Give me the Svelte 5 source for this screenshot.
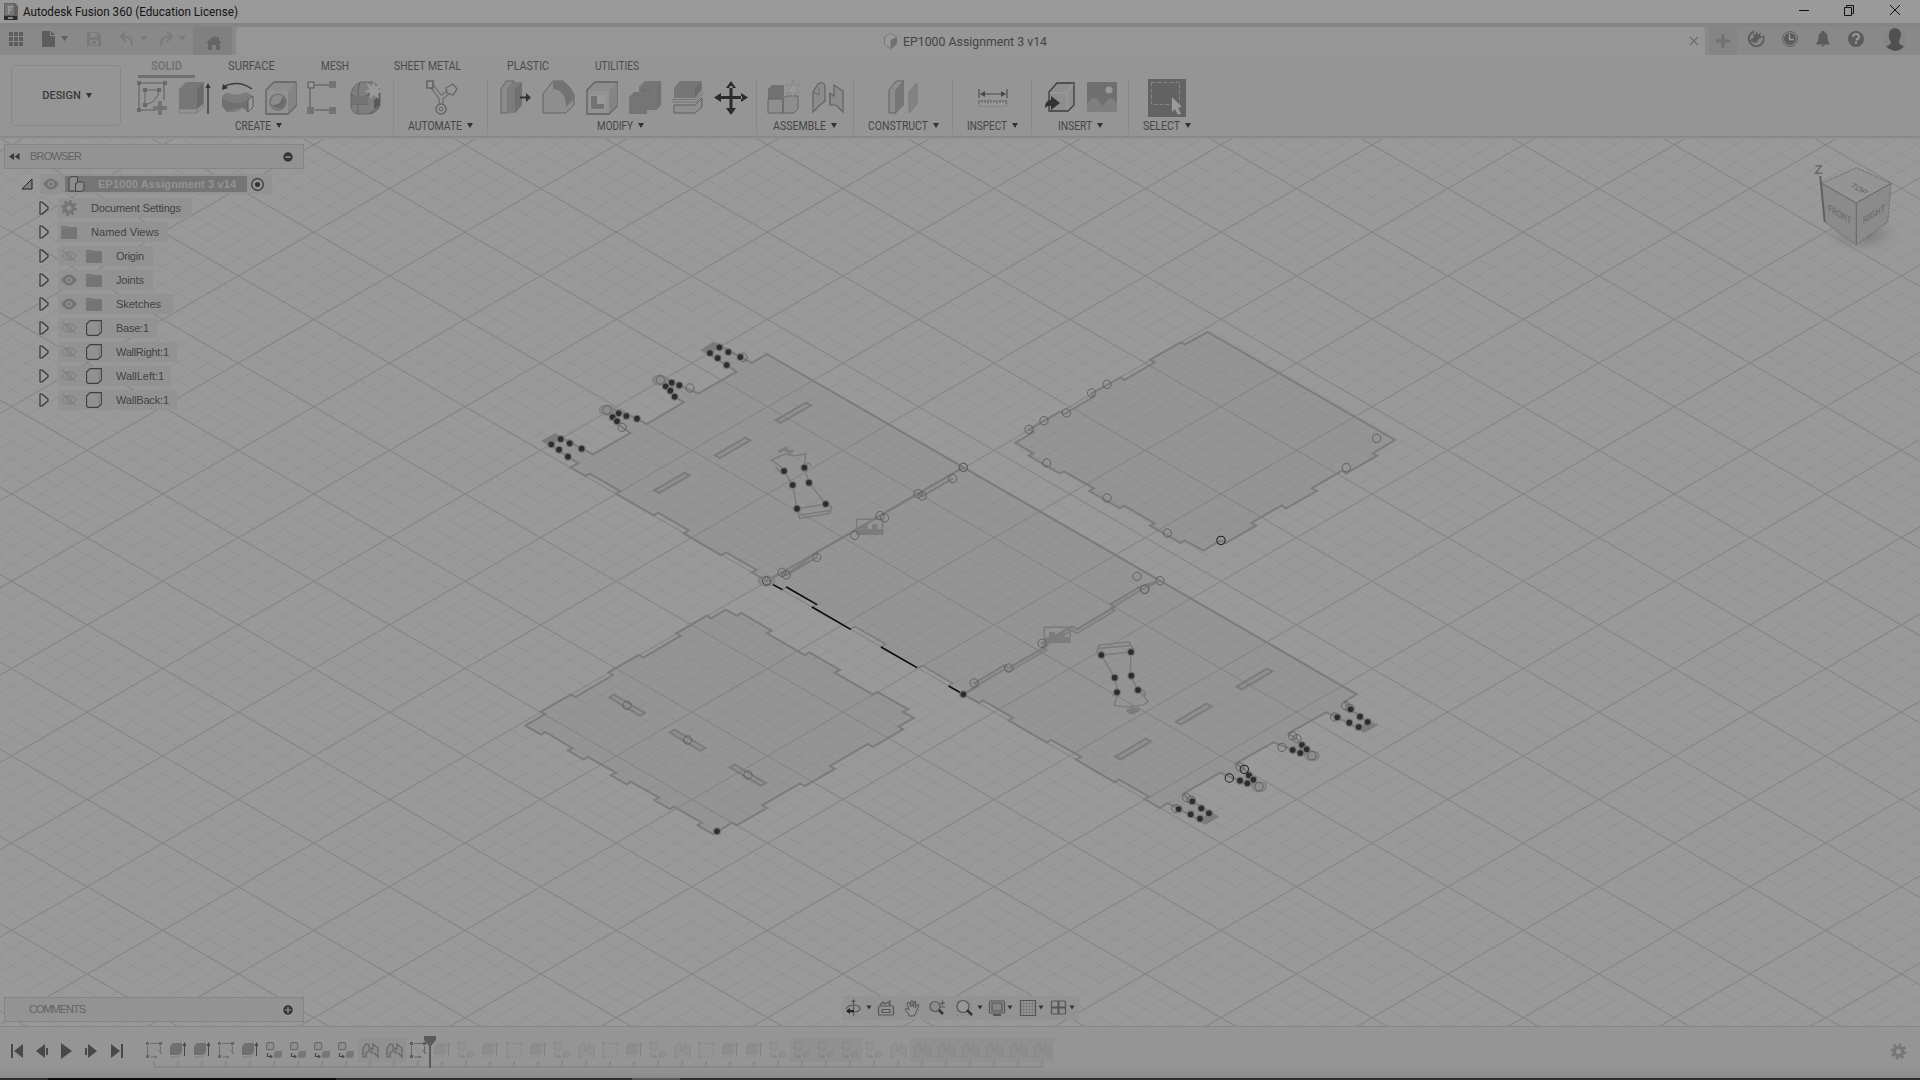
<script>
  const tabs = [
    ['SOLID', 151, 31], ['SURFACE', 228, 47], ['MESH', 321, 28],
    ['SHEET METAL', 394, 67], ['PLASTIC', 507, 42], ['UTILITIES', 595, 44]
  ];
  const tabItems = tabs.map(([name, x, w], i) => ({
    name, w, gap: i ? x - tabs[i - 1][1] - tabs[i - 1][2] : x
  }));

  const groups = [
    { label: 'CREATE', tw: 36, w: 267, icons: ['sketch', 'extrude', 'revolve', 'hole', 'pattern', 'form'] },
    { label: 'AUTOMATE', tw: 54, w: 94, icons: ['automate'] },
    { label: 'MODIFY', tw: 36, w: 269, icons: ['press', 'fillet', 'shell', 'combine', 'split', 'move'] },
    { label: 'ASSEMBLE', tw: 53, w: 97, icons: ['component', 'joint'] },
    { label: 'CONSTRUCT', tw: 60, w: 99, icons: ['plane'] },
    { label: 'INSPECT', tw: 40, w: 79, icons: ['measure'] },
    { label: 'INSERT', tw: 34, w: 97, icons: ['insert', 'image'] },
    { label: 'SELECT', tw: 37, w: 76, icons: ['select'] }
  ];

  const tree = [
    { t: 'Document Settings', icon: 'gear', w: 134, tw: 90 },
    { t: 'Named Views', icon: 'folder', w: 110, tw: 68 },
    { t: 'Origin', eye: 'off', icon: 'folder', w: 95, tw: 28 },
    { t: 'Joints', eye: 'on', icon: 'folder', w: 95, tw: 28 },
    { t: 'Sketches', eye: 'on', icon: 'folder', w: 115, tw: 45 },
    { t: 'Base:1', eye: 'off', icon: 'body', w: 99, tw: 33 },
    { t: 'WallRight:1', eye: 'off', icon: 'body', w: 119, tw: 53 },
    { t: 'WallLeft:1', eye: 'off', icon: 'body', w: 113, tw: 48 },
    { t: 'WallBack:1', eye: 'off', icon: 'body', w: 119, tw: 53 }
  ];

  // s = sketch, e = extrude, c = component, j = joint; capitals are highlighted
  const timeline = 'seesecccc' + 'JJs' + 'ecesecjsecjseec' + 'CCC' + 'cj' + 'JJJJJJ';
  const items = [...timeline].map((k, i) => ({ k: k.toLowerCase(), hl: k !== k.toLowerCase(), off: i > 11, dark: i === 11 }));

  // isometric grid: two families of parallel lines, every fifth one is heavier
  const S = 0.57735;
  const lines = [];
  const step = 17.456;
  for (let i = -80; i < 130; i++) {
    const a = -298.2 + i * step;
    const b = 1111.6 + (i - 40) * step;
    if (a + S * 1920 > 136 && a < 1026) lines.push({ y1: a, y2: a + S * 1920, major: i % 5 === 0 });
    if (b > 136 && b - S * 1920 < 1026) lines.push({ y1: b, y2: b - S * 1920, major: (i - 40) % 5 === 0 });
  }
  lines.sort((p, q) => p.major - q.major);

  const wallA = '770,102 1360,442 1224,521 1110,587 1034,632 920,697 829,765 816,757 770,783 725,757 740,750 648,697 634,706 522,641 536,631 444,578 432,587 318,521 331,514 239,461 227,468 181,442 205,430 174,410 99,363 136,343 215,386 249,403 361,339 335,322 308,291 272,268 290,258 381,296 410,312 521,247 494,230 467,199 432,180 450,166 508,196 566,220 680,155 650,135 577,90 612,68 691,111 725,129';
  const wallB = '660,-28 1250,313 1213,335 1232,358 1283,396 1309,405 1273,425 1192,382 1158,367 1045,430 1070,446 1100,478 1120,497 1081,489 1058,480 1000,457 887,520 913,538 940,568 965,590 922,580 900,573 840,548 728,612 757,634 832,680 796,701 716,657 683,639 660,654 614,627 627,620 536,568 524,577 408,509 424,501 333,450 320,458 206,391 219,383 129,331 117,339 70,313 115,288 103,279 193,226 206,234 320,168 306,160 396,109 411,118 525,50 511,43 600,-10';
  const base = '1390,-308 1980,32 1920,62 1831,115 1845,122 1731,190 1716,181 1626,232 1640,240 1526,306 1513,298 1423,351 1390,373 1346,348 1358,340 1267,287 1251,293 1143,231 1157,222 1064,169 1052,178 936,111 951,104 859,51 847,59 800,33';
  const sheetC = '743,66 1305,390 1238,430 1251,437 1159,490 1146,482 1055,535 1070,543 978,595 965,586 874,639 888,647 797,699 783,691 730,722 674,691 662,699 570,647 584,640 493,587 480,595 388,543 402,535 312,484 298,490 206,437 220,430 166,398 221,366 207,358 300,305 312,312 402,260 395,250 482,202 493,210 584,157 570,149 662,97 674,104';
  const sheetD = '678,119 710,137 723,129 815,182 801,190 914,255 928,247 1020,300 1004,308 1118,373 1132,366 1224,418 1209,426 1242,444 1195,470 1209,478 1118,531 1104,522 990,588 1005,596 914,648 900,640 787,706 801,714 710,766 696,758 640,793 593,766 606,758 521,710 510,717 463,690 477,683 392,635 380,643 333,616 348,608 264,561 251,569 204,542 218,535 136,486 123,494 76,467 135,432 122,426 213,373 226,381 339,315 325,307 416,255 430,263 542,197 529,190 620,137 633,145';

  const dotsA = [[628,82],[655,96],[600,99],[623,114],[650,135],[691,111],[485,188],[508,196],[467,199],[481,212],[494,230],[326,280],[349,288],[308,291],[321,304],[381,296],[152,357],[179,370],[124,373],[147,389],[215,386],[174,410],[822,453],[883,443],[848,495],[897,488],[861,566],[947,552]];
  const dotsB = [[484,195],[573,186],[524,263],[574,257],[531,307],[594,300],[1232,358],[1260,380],[1283,396],[1192,382],[1228,398],[1256,411],[1086,465],[1100,478],[1058,480],[1081,489],[927,556],[940,569],[900,572],[922,580],[757,634],[784,655],[807,670],[716,657],[752,673],[780,686],[70,313]];
  const ringsA = [[699,112],[540,204],[451,180],[291,270],[336,322],[1360,442],[1328,476],[1224,521],[1237,528],[1110,587],[1124,594],[1034,646],[920,712],[816,757],[829,765]];
  const ringsB = [[102,279],[206,234],[306,160],[614,-2],[1217,347],[1230,355],[1184,381],[1058,438],[1071,446],[1026,472],[1116,497],[900,531],[957,590],[740,623],[754,630],[708,656]];
  const ringsC = [[441,223],[395,249],[319,309],[252,332],[207,358],[260,459],[441,564],[622,669],[783,691,1],[1159,473],[1250,385],[531,799],[554,838],[600,812],[10,472]];
  const ringsD = [[381,406],[563,510],[744,615]];
</script>

{#snippet miniJoint()}
  <path d="M1 15V6l3-4 3 1v6l-3 2v4zM9 6l2 1V2l5 4v9l-4-4H9z" fill="#8b8b8b" stroke="#5c5c5c" stroke-width="1.2" />
{/snippet}

{#snippet cube(x, y, s)}
  <g transform="translate({x} {y}) scale({s})">
    <path d="M1 9 9 1h22v24l-8 8H1z" fill="#8d8d8d" stroke="#626262" stroke-width="1.3" />
    <path d="M2 10h21v22H2z" fill="#929292" /><path d="M23 10 31 2v22l-8 8z" fill="#848484" />
  </g>
{/snippet}

{#snippet tool(name)}
  <svg class="tool" width="34" height="40" viewBox="0 0 34 40">
    {#if name === 'sketch'}
      <path d="M4 5h25v17M4 5v27h17" fill="none" stroke="#5c5c5c" /><path d="M10 12h14M10 12v15M10 27q13-3 14-15" fill="none" stroke="#626262" />
      <path d="M2 3h4v4H2zM28 3h4v4h-4zM2 30h4v4H2zM8 10h4v4H8zM22 10h4v4h-4zM8 25h4v4H8z" fill="#686868" /><path d="M23 23h4v5h5v4h-5v5h-4v-5h-5v-4h5z" fill="#747474" />
    {:else if name === 'extrude'}
      <path d="M1 11 8 4h18v24l-7 7H1z" fill="#777" /><path d="M19 11 25 5v24l-6 5z" fill="#6b6b6b" /><path d="M1 31h18v4H1zM19 31l7-6v4l-7 6z" fill="#929292" stroke="#777" stroke-width=".6" /><path d="M30 36V9" stroke="#333" stroke-width="1.3" /><path d="m27.500 10 2.500-5 2.500 5z" fill="#333" />
    {:else if name === 'revolve'}
      <path d="M2 9Q17 1 31 11" fill="none" stroke="#3b3b3b" stroke-width="1.4" /><path d="m1 12 1-6 5 4z" fill="#333" />
      <path d="M1 19q3-6 7-4 8 4 17-1l7 4-6 7Q17 37 5 33L1 28z" fill="#7c7c7c" /><path d="M1 20q12 8 25 3l6-5v12l-6 4q-3-5-9-4-8 1-11 4l-5-6z" fill="#707070" /><path d="M27 22 32 18v11l-5 5z" fill="#999" stroke="#5c5c5c" />
    {:else if name === 'hole'}
      {@render cube(1, 3, 1)}<circle cx="14" cy="24" r="8" fill="#8d8d8d" stroke="#686868" stroke-width="1.2" /><path d="M18 18q6 6 0 12-6 2-10-3 10 0 10-9" fill="#6b6b6b" />
    {:else if name === 'pattern'}
      <path d="M3 11v18M8 7h14M8 32h14" stroke="#555" /><path d="M1 4h6v6H1z" fill="#999" stroke="#555" /><path d="M22 3h7v7h-7zM0 29h7v7H0zM22 29h7v7h-7z" fill="#737373" />
    {:else if name === 'form'}
      <path d="M1 17q1-10 10-13h12q7 4 7 12v11q-3 9-12 9H8q-7-1-7-9z" fill="#7f7f7f" stroke="#666" /><path d="M1 17q8 4 18 0V9l10 5v15l-10 7M10 4q-3 5-2 32M1 26h18" fill="none" stroke="#5f5f5f" /><path d="M2 18h16v8H2z" fill="#747474" /><path d="m24 22 6-5v10l-6 4z" fill="#5a5a5a" /><path d="m24 3 1.600 5.500L31 6l-2.500 5 3.500 3-4 1 1 6-5-4-4 4v-6l-5-1 4-3-3-6 6 3z" fill="#999" />
    {:else if name === 'automate'}
      <g fill="none"><path d="M7 7 17 20v12M28 11 17 20" stroke="#707070" stroke-width="5" /><path d="M7 7 17 20v12M28 11 17 20" stroke="#949494" stroke-width="2.400" /></g><path d="M3 3h6v7H3z" fill="#999" stroke="#606060" stroke-width="1.500" /><path d="m29 6 4 5-4 6-6-2-1-5z" fill="#969696" stroke="#666" stroke-width="1.300" /><circle cx="17" cy="31" r="5" fill="#999" stroke="#666" stroke-width="1.500" /><circle cx="17" cy="31" r="2" fill="none" stroke="#5d5d5d" />
    {:else if name === 'press'}
      <path d="M2 11 7 3h8L9 11v24H2z" fill="#8b8b8b" stroke="#656565" /><path d="m9 11 5-7h9v23l-7 8H9z" fill="#7c7c7c" /><path d="m16 11 7-7v23l-7 8z" fill="#707070" /><path d="M21 18.500h6V15l5 4.500-5 4.500v-3.500h-6z" fill="#333" />
    {:else if name === 'fillet'}
      <path d="M1 16 11 3h10l11 13v11l-8 8H1z" fill="#8e8e8e" stroke="#656565" /><path d="M11 4h10q10 3 11 17l-8 8q0-17-13-18z" fill="#737373" />
    {:else if name === 'shell'}
      {@render cube(1, 3, 1)}<path d="M5 17h15v15H5z" fill="#999" /><path d="M6 18v13h13v-5h-7v-8z" fill="#737373" />
    {:else if name === 'combine'}
      <path d="M1 19 6 14h5V9l6-6h16v24l-5 5h-9v4H1z" fill="#757575" /><path d="M2 19h10v-9h15M28 10v22l5-5V4z" fill="#707070" stroke="#7e7e7e" stroke-width=".7" />
    {:else if name === 'split'}
      <path d="M3 10 9 3h22v9l-7 8H3z" fill="#767676" /><path d="m24 10 6-6v8l-6 7z" fill="#6b6b6b" /><path d="M1 21.500h23l8-8M1 24h24l7-8" fill="none" stroke="#777" /><path d="M3 27h21l7-7v9l-7 6H3z" fill="#8f8f8f" stroke="#5f5f5f" />
    {:else if name === 'move'}
      <path d="M15.500 8h3v10H28v3h-9.500v11h-3V21H6v-3h9.500zM12 10h10L17 3zM12 30h10l-5 7zM7 15v9l-7-4.500zM27 15v9l7-4.500z" fill="#2c2c2c" />
    {:else if name === 'component'}
      <path d="M1 11 5 7h12v11l-2 3H1z" fill="#727272" /><path d="M1 21h15v14H1zM16 20l4-2h11v13l-4 4H16z" fill="#8e8e8e" stroke="#656565" /><path d="m26 2 1.700 6 5-2-3 5 3 4-5-1-1.700 6-2-6-5 2 3-5-3-5 5 3z" fill="#999" stroke="#888" />
    {:else if name === 'joint'}
      <path d="M3 34V14L8 6q6-3 7 2v15l-5 4zM20 15l4 3V7l9 6v21l-7-7h-6z" fill="#8c8c8c" stroke="#636363" stroke-width="1.200" /><path d="M3 14l6 3V9M20 27V15" stroke="#686868" fill="none" />
    {:else if name === 'plane'}
      <path d="M3 12 10 3h8l-8 9v23H3z" fill="#8d8d8d" stroke="#606060" /><path d="m10 12 8-9v24l-8 8z" fill="#757575" /><path d="M23 14 31 5v21l-8 9z" fill="#838383" stroke="#787878" />
    {:else if name === 'measure'}
      <path d="M4 11v9M32 11v9M6 16h24" stroke="#4f4f4f" stroke-width="1.200" /><path d="m5 16 5-3v6zM31 16l-5-3v6z" fill="#484848" /><path d="M4 23h28v5H4z" fill="#999" stroke="#828282" /><path d="M4 22v4M7 22v3M10 22v3M13 22v4M16 22v3M19 22v3M22 22v4M25 22v3M28 22v3M31 22v4" stroke="#606060" />
    {:else if name === 'insert'}
      <path d="M7 14 15 5h17v22l-6 6H7z" fill="#8e8e8e" stroke="#3c3c3c" stroke-width="1.300" /><path d="M8 15h17v17M25 14l6-8" fill="none" stroke="#999" stroke-width="1.600" /><path d="M3 30q0-8 6-8v-4l9 7-9 7v-4q-3-1-6 2z" fill="#333" />
    {:else if name === 'image'}
      <path d="M2 4h30v30H2z" fill="#6f6f6f" /><path d="M2 34V27q7-14 13-2 3 4 5 0 6-10 12 1v8z" fill="#7f7f7f" /><circle cx="24" cy="12" r="3.500" fill="#999" />
    {/if}
  </svg>
{/snippet}

{#snippet caret()}<i class="caret"></i>{/snippet}

{#snippet mini(k)}
  <svg width="17" height="17" viewBox="0 0 17 17">
    {#if k === 's'}
      <path d="M4 1.500h9M1.500 4v9M4 15h5M14.500 4v5" stroke="#666" fill="none" /><path d="M0 0h3v3H0zM13 0h3v3h-3zM0 13h3v3H0z" fill="#5c5c5c" /><path d="m12 7 4 4-1 1zM9 14l3 1-3 1z" fill="#555" />
    {:else if k === 'e'}
      <path d="m0 4 3-3h9v9l-3 3H0z" fill="#686868" /><path d="M0 14h9v2H0zM9 14l3-3v2l-3 3z" fill="#888" /><path d="M14.500 14V3" stroke="#333" /><path d="m12.500 4 2-4 2 4z" fill="#333" />
    {:else if k === 'c'}
      <rect x=".7" y=".7" width="7" height="7" rx="1.500" fill="#909090" stroke="#606060" stroke-width="1.200" /><path d="m8 11 2-2h6v5l-2 2H8z" fill="#717171" /><path d="M1.500 11v3.500H5" fill="none" stroke="#333" stroke-width="1.200" /><path d="m4 12.500 3 2-3 2z" fill="#333" />
    {:else}
      {@render miniJoint()}
    {/if}
  </svg>
{/snippet}

{#snippet slot3(pts, dx)}
  <polygon points={pts} /><polygon points={pts} transform="translate({dx} 105)" /><polygon points={pts} transform="translate({2 * dx} 210)" />
{/snippet}

{#snippet marks(dots, rings)}
  {#each rings as [x, y, dark]}<circle class="ring" class:dark cx={x} cy={y} r="12.500" />{/each}
  {#each dots as [x, y]}<circle class="halo" cx={x} cy={y} r="12" /><circle class="dot" cx={x} cy={y} r="8.500" />{/each}
{/snippet}

<div class="app">
  <header class="title">
    <svg width="14" height="17" viewBox="0 0 14 17"><path d="M1 0h10l3 3v14H0V1z" fill="#616161" /><path d="M1 1h9v11H1z" fill="#777" /><path d="M4 3h5v1.500H5.500V6H8v1.500H5.500V11H4z" fill="#999" /><path d="M0 13h13v4H0z" fill="#2c2c2c" /><path d="M4 14h5v2H4z" fill="#888" /></svg>
    <span class="name"><svg width="218" height="18"><text x="0" y="13" textLength="215" lengthAdjust="spacingAndGlyphs">Autodesk Fusion 360 (Education License)</text></svg></span>
    <svg class="win" width="106" height="14" viewBox="0 0 106 14"><path d="M1 7.500h10" stroke="#111" /><path d="M46.500 4.500h7v8h-7zM48.500 4V2.500h7v8H54" fill="none" stroke="#111" /><path d="m92 2 10 10M102 2 92 12" stroke="#111" /></svg>
  </header>

  <div class="docbar">
    <div class="quick">
      <svg width="190" height="28" viewBox="0 0 190 28">
        <g fill="#5d5d5d"><path d="M9 5h4v4H9zM14 5h4v4h-4zM19 5h4v4h-4zM9 10h4v4H9zM14 10h4v4h-4zM19 10h4v4h-4zM9 15h4v4H9zM14 15h4v4h-4zM19 15h4v4h-4z" /><path d="M42 4h8v5h5v11H42zM51 4l4 4h-4zM61 9h7l-3.500 5z" /></g>
        <g fill="#7a7a7a"><path d="M87 5h11l3 3v11H87zM90 6v4h7V6zM90 13v5h8v-5z" fill-rule="evenodd" /><path d="M92 14h4v3h-4zM140 9h7l-3.500 5zM179 9h7l-3.500 5z" /></g>
        <path d="m126 4.500-5 5 5 5M121 9.500h4q7 0 7 9M167 4.500l5 5-5 5M172 9.500h-4q-7 0-7 9" fill="none" stroke="#7a7a7a" stroke-width="2" />
      </svg>
      <div class="home"><svg width="16" height="14" viewBox="0 0 16 14"><path d="m0 7 8-7 2.500 2V1H13v3.500L16 7h-2v7h-4V9H6v5H2V7z" fill="#666" /></svg></div>
    </div>
    <div class="active">
      <svg width="13" height="16" viewBox="0 0 13 16"><path d="m6.500 0 6 4v7l-6 5-6-5V4z" fill="#999" stroke="#777" /><path d="M6.500 7v9l6-5V4z" fill="#707070" /></svg>
      <span class="docname"><svg width="147" height="18"><text x="0" y="14" textLength="144" lengthAdjust="spacingAndGlyphs">EP1000 Assignment 3 v14</text></svg></span>
      <svg class="close" width="10" height="10" viewBox="0 0 10 10"><path d="m1 1 8 8M9 1 1 9" stroke="#6d6d6d" stroke-width="1.300" /></svg>
    </div>
    <div class="account">
      <div class="plus"><svg width="14" height="14" viewBox="0 0 14 14"><path d="M5.500 0h3v5.500H14v3H8.500V14h-3V8.500H0v-3h5.500z" fill="#717171" /></svg></div>
      <svg width="172" height="28" viewBox="0 0 172 28">
        <g fill="#5c5c5c">
          <path d="M17 4.500a7.500 7.500 0 1 0 9 4" fill="none" stroke="#606060" stroke-width="2" /><path d="m12 14 5-4-2-5 3 3 2-4 1 4 3-3-1 4 3 1-4 2-3 4z" />
          <circle cx="53" cy="12" r="7.500" fill="none" stroke="#606060" /><circle cx="53" cy="12" r="6" /><path d="M52.500 7v5.500H57" fill="none" stroke="#999" stroke-width="1.400" />
          <path d="M79.500 16q2-2 2-6 0-4 3-4.500V4h3v1.500q3 .5 3 4.500 0 4 2 6v1.500h-13zM84 18h4l-2 2z" />
          <circle cx="119" cy="12" r="8" /><path d="M116 10q0-3 3-3t3 2.500q0 2-3 3.500M119 14.500v2.500" fill="none" stroke="#999" stroke-width="2" />
          <circle cx="158" cy="12" r="11.500" fill="#858585" /><path d="M152 7q0-5 6-6 6 1 6 7l-2 7q0 3 5 4-2 4-9 5-6-1-9-5 5-1 5-4-3-4-2-8z" fill="#505050" />
        </g>
      </svg>
    </div>
  </div>

  <div class="ribbon">
    <div class="design"><b>DESIGN</b>{@render caret()}</div>
    <div class="rtabs">
      {#each tabItems as t, i}
        <span class:on={i === 0} style="margin-left:{t.gap}px"><svg width={t.w} height="15"><text x="0" y="12" textLength={t.w} lengthAdjust="spacingAndGlyphs">{t.name}</text></svg></span>
      {/each}
    </div>
    <div class="groups">
      {#each groups as g}
        <div class="group" style="width:{g.w}px">
          <div class="icons">
            {#each g.icons as n}
              {#if n === 'select'}
                <svg width="38" height="40" viewBox="0 0 38 40"><path d="M0 1h38v38H0z" fill="#636363" /><path d="M3.500 4.500h28v22h-28z" fill="none" stroke="#858585" stroke-dasharray="4 2" /><path d="m24 19 10 10-4 .5 3 6-3 1.500-3-6-3 3z" fill="#9b9b9b" /></svg>
              {:else}{@render tool(n)}{/if}
            {/each}
          </div>
          <div class="label"><svg width={g.tw + 1} height="15"><text x="0" y="12" textLength={g.tw} lengthAdjust="spacingAndGlyphs">{g.label}</text></svg>{@render caret()}</div>
        </div>
      {/each}
    </div>
  </div>

  <main>
    <svg class="scene" width="1920" height="889" viewBox="0 137 1920 889">
      {#each lines as l}<line class:major={l.major} x1="0" y1={l.y1} x2="1920" y2={l.y2} />{/each}
      <path class="edge" d="M0 137h1920v2H0z" />
      <g class="sheet" transform="translate(500 570) scale(.33333)">
        <polygon points={base} class="area" /><polygon points={sheetD} />
        {@render slot3('328,382 342,374 435,429 420,437', 181)}
        <path class="ink" d="m808 38 39 21M859 51l92 53M936 111l116 67M1143 231l108 62M1346 348l44 25" />
        <ellipse class="glow" cx="800" cy="33" rx="24" ry="14" />
        {@render marks([[651, 784]], ringsD)}<circle class="ring mid" cx="800" cy="33" r="12.500" />
      </g>
      <g class="sheet" transform="translate(510 320) scale(.33333)">
        <polygon points={wallA} />
        <path d="M770 783l46-26 13 8 91-53v-15l114-65M1110 587l114-66 13 7 91-52M1360 442l590 340" />
        {@render slot3('797,301 888,248 903,256 811,309', -182)}
        <path d="m822 453-13-16-24-17 40-18 30 5 32-6-4 42 14 45 50 64 18 8-5 20-91 15-8-29-13-71zM861 566l86-14M868 586l96-15M797 440l15 18M883 443q12-26 20-5" class="thin" />
        <path d="M806 396l16-9 20 10M825 380l16 22M838 398l12-8" class="bold" />
        <ellipse class="glow" cx="449" cy="180" rx="21" ry="14" /><ellipse class="glow" cx="290" cy="270" rx="21" ry="14" />
        <path class="solid" d="M577 90l35-22 20 10-30 20zM99 363l37-20 20 10-32 20z" />
        <path d="M1040 598h78v45h-78z" class="thin" /><path class="solid" d="M1040 627h16v-15h17v15h13v-15h17v15h15v16h-78z" />
        {@render marks(dotsA, ringsA)}
      </g>
      <g class="sheet" transform="translate(960 310) scale(.33333)">
        <polygon points={sheetC} />
        {@render marks([], ringsC)}
      </g>
      <g class="sheet" transform="translate(940 590) scale(.33333)">
        <polygon points={wallB} />
        {@render slot3('890,290 981,236 997,244 905,298', -182)}
        <path class="thin" d="m484 195-14-10 7-20 90-9 14 23-8 7-2 72 23 42 31 34-13 10-40 8-49-5 10-40-8-43zM484 195l89-9M475 175l95-8M516 318l15-11M594 300q25-2 20 18" />
        <path class="bold" d="M560 362l40-5M566 370l30-8M574 347l9 25" />
        <ellipse class="glow" cx="1116" cy="497" rx="21" ry="14" /><ellipse class="glow" cx="958" cy="590" rx="21" ry="14" />
        <path class="solid" d="M1256 411l27-15 26 9-36 20zM780 686l27-15 26 9-37 21z" />
        <path d="M313 112h77v45h-77z" class="thin" /><path class="solid" d="M313 142h14v-16h18v12l29-15v19h16v16h-77z" />
        {@render marks(dotsB, ringsB)}<circle class="ring dark" cx="913" cy="538" r="12.500" /><circle class="ring dark" cx="868" cy="564" r="12.500" />
      </g>
      <defs><radialGradient id="shade"><stop offset="0" stop-color="#6f6f6f" /><stop offset="1" stop-color="#999" stop-opacity="0" /></radialGradient></defs>
      <g class="viewcube">
        <ellipse cx="1862" cy="234" rx="44" ry="22" fill="url(#shade)" />
        <path d="m1856.300 167.700 34.700 15.600-34.700 19.700-34.600-19.700z" fill="#949494" /><path d="m1821.700 183.300 34.600 19.700v41.700l-31.300-22.700z" fill="#8b8b8b" /><path d="m1891 183.300-34.700 19.700v41.700l31.400-22.700z" fill="#8b8b8b" />
        <path d="m1821.700 183.300 34.600 19.700 34.700-19.700M1856.300 203v41.700" fill="none" stroke="#666" /><path d="m1821.700 183.300 34.600-15.600 34.700 15.600-3.300 38.700-31.400 22.700-31.300-22.700" fill="none" stroke="#707070" stroke-dasharray="3 1" /><path d="m1820.300 176 4.400 46" stroke="#606060" stroke-width="2" />
        <text transform="matrix(1 .57 0 1.250 1828 211)" textLength="23" lengthAdjust="spacingAndGlyphs">FRONT</text><text transform="matrix(1 -.6 0 1.250 1863 224)" textLength="22" lengthAdjust="spacingAndGlyphs">RIGHT</text><text transform="matrix(.9 .5 -.9 .55 1849 186)" textLength="17" lengthAdjust="spacingAndGlyphs">TOP</text><text class="z" x="1814.500" y="174">Z</text>
      </g>
    </svg>

    <section class="browser">
      <div class="panel">
        <svg width="11" height="8" viewBox="0 0 11 8"><path d="M5 0v7L0 3.500zM10.500 0v7l-5-3.500z" fill="#393939" /></svg>
        <span class="ptitle"><svg width="54" height="15"><text x="0" y="11" textLength="52">BROWSER</text></svg></span>
        <svg class="btn" width="10" height="10" viewBox="0 0 10 10"><circle cx="5" cy="5" r="4.700" fill="#353535" /><path d="M2.500 5h5" stroke="#999" stroke-width="1.500" /></svg>
      </div>
      <div class="root">
        <svg class="tri" width="12" height="12" viewBox="0 0 12 12"><path d="M11 1v10H1z" fill="#808080" stroke="#222" /></svg>
        <div class="rootbox">
          <svg width="16" height="12" viewBox="0 0 16 12"><path d="M0 6q8-11 16 0-8 11-16 0z" fill="#757575" /><circle cx="8" cy="6" r="3" fill="#939393" /><circle cx="8" cy="6" r="1.500" fill="#6c6c6c" /></svg>
          <div class="sel">
            <svg width="18" height="16" viewBox="0 0 18 16"><path d="M1 3 3 .7h6.500V6l-2 2v7H1zM7.500 8l2-2H15l1 1v6l-2 2.300H7.500z" fill="#8d8d8d" stroke="#444" /></svg>
            <b><svg width="140" height="15"><text x="0" y="11" textLength="138">EP1000 Assignment 3 v14</text></svg></b>
          </div>
          <svg width="13" height="13" viewBox="0 0 13 13"><circle cx="6.500" cy="6.500" r="5.800" fill="none" stroke="#333" stroke-width="1.200" /><circle cx="6.500" cy="6.500" r="2.500" fill="#333" /></svg>
        </div>
      </div>
      {#each tree as r}
        <div class="row">
          <svg class="arrow" width="10" height="14" viewBox="0 0 10 14"><path d="M1 1h2l6 5v2l-6 5H1z" fill="#999" stroke="#2e2e2e" stroke-width="1.100" /></svg>
          <div class="cell" style="width:{r.w}px">
            {#if r.eye}
              <svg class="eye" width="16" height="12" viewBox="0 0 16 12">
                {#if r.eye === 'on'}<path d="M0 6q8-11 16 0-8 11-16 0z" fill="#747474" /><circle cx="8" cy="6" r="2.800" fill="#919191" /><circle cx="8" cy="6" r="1.300" fill="#6c6c6c" />
                {:else}<path d="M.5 6q7.500-9 15 0-7.500 9-15 0zM1 0l14 12" fill="none" stroke="#7d7d7d" /><circle cx="8" cy="6" r="2.500" fill="none" stroke="#7d7d7d" />{/if}
              </svg>
            {/if}
            <svg class="kind" width="16" height="16" viewBox="0 0 16 16">
              {#if r.icon === 'gear'}<circle cx="8" cy="8" r="4.300" fill="none" stroke="#757575" stroke-width="3.500" /><circle cx="8" cy="8" r="6.800" fill="none" stroke="#757575" stroke-width="2.200" stroke-dasharray="2.700 2.640" />
              {:else if r.icon === 'folder'}<path d="M0 2h6l1 1h9v12H0z" fill="#757575" /><path d="M0 4h7l1-1.200" fill="none" stroke="#8a8a8a" stroke-width=".7" />
              {:else}<path d="M.6 4 4 .6h11.400V12L12 15.400H2L.6 14z" fill="#919191" stroke="#404040" stroke-width="1.100" /><path d="M12 5v9l3-3V2z" fill="#858585" />{/if}
            </svg>
            <span><svg width={r.tw + 2} height="15"><text x="0" y="11" textLength={r.tw}>{r.t}</text></svg></span>
          </div>
        </div>
      {/each}
    </section>

    <div class="panel comments">
      <span class="ptitle"><svg width="58" height="15"><text x="0" y="11" textLength="57">COMMENTS</text></svg></span>
      <svg class="btn" width="10" height="10" viewBox="0 0 10 10"><circle cx="5" cy="5" r="4.700" fill="#353535" /><path d="M2 5h6M5 2v6" stroke="#999" stroke-width="1.200" /></svg>
    </div>

    <svg class="nav" width="237" height="24" viewBox="0 0 237 24">
      <g fill="none" stroke="#555" stroke-width="1.200">
        <path d="M4 13q2-4 8-4 7 1 6 4-2 4-9 3M11.500 5v15M10 6l1.500-2L13 6" /><path d="m4 15 4-3v2h4v2H8v2z" fill="#222" stroke="none" />
        <rect x="36.500" y="10" width="15" height="9" rx="1" /><path d="M40 13.500h8v3h-8zM38 9l3-3 2 2 5-3-1 3 2 1" />
        <path d="M67 19q-2-4-4-5l1-2 3 2-2-7 2-1 2 5V5h2v6l2-6 1 1-1 6 3-4 1 1-4 10-2 1h-4z" fill="#969696" stroke-width="1" />
        <circle cx="93" cy="10.500" r="5" fill="#8c8c8c" /><path d="m97 14 4 4" stroke="#333" stroke-width="2.500" /><path d="M98 7h5M100.500 4.500v5M98 11h5" />
        <path d="M115 5h14v14h-14z" stroke="#888" stroke-dasharray="3 2" /><circle cx="121" cy="10.500" r="6" fill="#979797" /><path d="m125 14 5 5" stroke="#333" stroke-width="2.500" />
        <rect x="147.500" y="5" width="15" height="12" rx="1" /><path d="M150 7h10v8h-10z" fill="#858585" /><path d="M151 19h8" stroke-width="2" />
        <path d="M178.500 4.500h15v15h-15z" /><path d="M181.500 5v14M184.500 5v14M187.500 5v14M190.500 5v14M179 7.500h14M179 10.500h14M179 13.500h14M179 16.500h14" stroke="#7c7c7c" stroke-width=".8" />
        <rect x="209.500" y="5" width="14" height="13" rx="1" /><path d="M216.500 5v13M210 11.500h13" stroke-width="2" />
      </g>
      <path d="M24.500 9.500h5l-2.500 4zM135.500 9.500h5l-2.500 4zM165.500 9.500h5l-2.500 4zM196.500 9.500h5l-2.500 4zM227.500 9.500h5l-2.500 4z" fill="#333" />
    </svg>
  </main>

  <footer>
    <svg class="play" width="113" height="16" viewBox="0 0 113 16"><path d="M0 1h2v14H0zM12 1v14L3 8zM34 1v14l-9-7zM35 5h2v7h-2zM50 0l11 8-11 8zM74 5h2v7h-2zM77 1l9 7-9 7zM100 1l9 7-9 7zM110 1h2v14h-2z" fill="#484848" /></svg>
    <div class="track">
      {#each items as it}
        <div class="step" class:hl={it.hl} class:off={it.off} class:dark={it.dark}>{@render mini(it.k)}</div>
      {/each}
      <svg class="marker" width="12" height="32" viewBox="0 0 12 32"><path d="M0 0h12v4L7 10v22H5V10L0 4z" fill="#5a5a5a" /></svg>
    </div>
    <svg class="cog" width="17" height="17" viewBox="0 0 17 17"><circle cx="8.500" cy="8.500" r="4.300" fill="none" stroke="#777" stroke-width="3.500" /><circle cx="8.500" cy="8.500" r="7" fill="none" stroke="#777" stroke-width="2.200" stroke-dasharray="2.700 2.800" /></svg>
  </footer>
  <div class="taskbar"><i></i><em></em></div>
</div>

<style>
  :global(body) { background: #999; overflow: hidden; }
  .app { width: 1920px; height: 1080px; display: flex; flex-direction: column; background: #959595; font-family: 'Liberation Sans', Arial, sans-serif; font-size: 11px; color: #3b3b3b; overflow: hidden; }
  svg { display: block; flex: none; overflow: visible; }
  svg text { fill: currentColor; }
  .title { height: 23px; flex: none; display: flex; align-items: center; background: #9a9a9a; padding: 0 12px 0 4px; box-sizing: border-box; }
  .name { margin-left: 5px; font: 12px Roboto, sans-serif; color: #141414; }
  .win { margin-left: auto; margin-right: 4px; margin-top: -3px; }
  .docbar { height: 32px; flex: none; display: flex; background: #898989; border-top: 4px solid #858585; box-sizing: border-box; }
  .quick { width: 236px; display: flex; }
  .quick > svg { margin-right: 3px; }
  .home { width: 39px; background: #808080; display: flex; align-items: center; justify-content: center; padding: 3px 0 0 2px; box-sizing: border-box; }
  .active { width: 1469px; background: #969696; border-radius: 4px 4px 0 0; display: flex; align-items: center; padding-left: 648px; box-sizing: border-box; }
  .docname { margin-left: 6px; font: 13px Roboto, sans-serif; color: #444; }
  .close { margin-left: auto; margin-right: 6px; }
  .account { display: flex; padding-left: 4px; }
  .plus { width: 28px; display: flex; align-items: center; justify-content: center; background: #858585; }
  .ribbon { height: 82px; flex: none; background: #959595; border-bottom: 1px solid #868686; box-sizing: border-box; display: grid; grid-template: 22px 1fr / 127px 1fr; }
  .design { grid-row: 1 / 3; margin: 10px 6px 10px 11px; padding-left: 2px; border: 1px solid #888; border-radius: 4px; display: flex; align-items: center; justify-content: center; gap: 5px; box-sizing: border-box; font: 500 11px Roboto, sans-serif; color: #3a3a3a; }
  .design b { font-weight: 500; }
  .rtabs { display: flex; margin-left: -127px; font: 12px Roboto, sans-serif; color: #4c4c4c; }
  .rtabs span { height: 15px; margin-top: 3px; position: relative; }
  .rtabs .on { color: #737373; font-weight: 700; }
  .rtabs .on::after { content: ''; position: absolute; left: -13px; top: 17px; width: 57px; height: 3px; background: #707070; }
  .groups { display: flex; }
  .group { border-right: 1px solid #898989; box-sizing: border-box; display: flex; flex-direction: column; align-items: center; margin: 3px 0 2px; }
  .group:last-child { border: 0; }
  .group:first-child .icons { margin-left: -2px; }
  .group:nth-child(3) .icons { margin-left: 2px; }
  .icons { display: flex; gap: 9px; height: 39px; margin-top: -2px; }
  .label { display: flex; align-items: center; gap: 4px; margin-top: 1px; height: 15px; font: 12px Roboto, sans-serif; color: #464646; }
  .group:first-child .label, .group:nth-child(3) .label { margin-left: -3px; }
  .caret { border: 3px solid transparent; border-top: 5px solid #333; border-bottom: 0; }
  main { position: relative; height: 889px; flex: none; background: #999; overflow: hidden; }
  .scene line { stroke: #909090; stroke-width: .8; }
  .scene line.major { stroke: #858585; stroke-width: 1.1; }
  .edge { fill: #909090; }
  .sheet { fill: none; stroke: #7b7b7b; stroke-width: 6; }
  .sheet polygon { fill: rgba(125, 125, 125, .18); }
  .sheet .area { stroke-width: 4.5; }
  .thin { stroke-width: 4.5; }
  .bold { stroke-width: 8; }
  .ink { stroke: #0b0b0b; stroke-width: 4.5; }
  .solid { fill: #7c7c7c; stroke: none; }
  .glow { fill: #8d8d8d; stroke: #808080; stroke-width: 5; }
  .ring { fill: none; stroke: #5d5d5d; stroke-width: 2.8; }
  .ring.mid { stroke: #404040; }
  .ring.dark { stroke: #202020; stroke-width: 3.2; }
  .halo { fill: #777; stroke: none; }
  .dot { fill: #2d2d2d; stroke: none; }
  .viewcube text { font: 700 8px 'Liberation Sans', sans-serif; fill: #707070; }
  .viewcube .z { font-size: 13px; fill: #6a6a6a; }
  .browser { position: absolute; left: 4px; top: 7px; width: 300px; }
  .panel { height: 25px; width: 300px; box-sizing: border-box; background: #939393; border: 1px solid #858585; display: flex; align-items: center; padding: 0 10px 0 4px; }
  .panel .ptitle { margin-left: 10px; font-size: 11px; color: #636363; }
  .panel .btn { margin-left: auto; }
  .comments { position: absolute; left: 4px; top: 860px; padding-left: 14px; }
  .root { display: flex; height: 20px; margin-top: 5px; align-items: center; }
  .tri { margin-left: 17px; }
  .rootbox { margin-left: 7px; width: 232px; height: 20px; background: #929292; display: flex; align-items: center; padding-left: 3px; box-sizing: border-box; }
  .sel { width: 182px; height: 16px; margin: 0 4px 0 6px; background: #757575; display: flex; align-items: center; padding-left: 3px; box-sizing: border-box; }
  .sel b { margin-left: 12px; color: #939393; }
  .row { height: 20px; margin-top: 4px; display: flex; align-items: center; padding-left: 35px; }
  .cell { height: 20px; margin-left: 9px; background: #929292; display: flex; align-items: center; padding-left: 3px; box-sizing: border-box; }
  .eye { margin-right: 9px; }
  .cell span { margin-left: 14px; font-size: 11px; color: #424242; }
  .nav { position: absolute; left: 842px; top: 859px; background: #939393; }
  footer { height: 52px; flex: none; background: linear-gradient(#959595 80%, #8a8a8a); border-top: 1px solid #868686; box-sizing: border-box; display: flex; align-items: flex-start; padding: 0 13px 0 11px; }
  .play { margin-top: 16px; }
  .track { position: relative; display: flex; margin-left: 18px; }
  .step { width: 24px; height: 41px; padding-top: 15px; box-sizing: border-box; display: flex; justify-content: center; align-items: flex-start; border-bottom: 2px solid #868686; position: relative; opacity: .8; }
  .step:first-child { border-image: linear-gradient(90deg, transparent 50%, #868686 50%) 1; }
  .step:last-of-type { border-image: linear-gradient(90deg, #868686 54%, transparent 54%) 1; }
  .step::after { content: ''; position: absolute; left: 11px; bottom: 0; width: 2px; height: 5px; background: #868686; }
  .step > svg { position: relative; }
  .step.hl::before { content: ''; position: absolute; inset: 11px 0 4px; background: #909090; }
  .step.off > svg { opacity: .22; }
  .step.dark { opacity: 1; }
  .marker { position: absolute; left: 282px; top: 9px; }
  .cog { margin: 16px 0 0 auto; }
  .taskbar { height: 2px; background: #2f2c2f; display: flex; }
  .taskbar i { width: 288px; margin-left: 48px; background: #0d0d0d; }
  .taskbar em { width: 48px; margin-left: 296px; background: #555; }
</style>
